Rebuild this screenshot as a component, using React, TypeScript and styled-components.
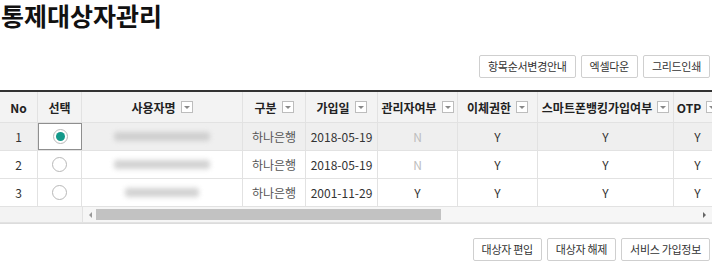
import React from "react"
import styled, { createGlobalStyle } from "styled-components"

const GlobalStyle = createGlobalStyle`
    body {
        margin : 0;
        background : #fff;
        font-family : "Noto Sans CJK KR", "Noto Sans", sans-serif;
        color : #333;
    }
`

const COLS = "38px 44px 161px 63px 72px 80px 80px 136px 48px"

const Page = styled.div`
    width : 712px;
    overflow : hidden;
`

const Title = styled.h1`
    margin : 0;
    padding-left : 1px;
    font-size : 25px;
    line-height : 30px;
    font-weight : 700;
    color : #111;
`

const Toolbar = styled.div<{ $top: number }>`
    display : flex;
    justify-content : flex-end;
    gap : 5px;
    padding-right : 2px;
    margin-top : ${p => p.$top}px;
`

const Button = styled.button`
    height : 23px;
    padding : 0 8px;
    background : #fff;
    border : 1px solid #cfcfcf;
    border-radius : 2px;
    font-family : "Noto Sans CJK KR", sans-serif;
    font-size : 11px;
    letter-spacing : -0.3px;
    color : #333;
    line-height : 21px;
`

const Grid = styled.div`
    margin-top : 12px;
    border-top : 2px solid #333;
    border-bottom : 1px solid #dcdcdc;
    width : 712px;
    overflow : hidden;
`

const Row = styled.div<{ $selected?: boolean; $head?: boolean }>`
    display : grid;
    grid-template-columns : ${COLS};
    height : ${p => (p.$head ? 31 : 28)}px;
    background : ${p => (p.$head ? "#f3f3f3" : p.$selected ? "#efefef" : "#fff")};
    border-bottom : 1px solid #e2e2e2;
    box-sizing : border-box;
    width : max-content;
`

const Cell = styled.div<{ $active?: boolean; $muted?: boolean; $head?: boolean }>`
    display : flex;
    align-items : center;
    justify-content : center;
    gap : 5px;
    border-right : 1px solid #e2e2e2;
    font-size : 12px;
    font-weight : ${p => (p.$head ? 700 : 400)};
    color : ${p => (p.$muted ? "#bdbdbd" : p.$head ? "#222" : "#333")};
    white-space : nowrap;
    box-sizing : border-box;
    ${p => p.$active && `
        background : #fff;
        border : 1.5px solid #8f8f8f;
    `}
`

const Blurred = styled.span<{ $w: number }>`
    display : inline-block;
    width : ${p => p.$w}px;
    height : 9px;
    background : #c8c8c8;
    border-radius : 3px;
    filter : blur(2.5px);
    opacity : 0.8;
`

const Bank = styled.span`
    color : #555;
`

const FilterBox = styled.span`
    display : inline-flex;
    flex : none;
    align-items : center;
    justify-content : center;
    width : 12px;
    height : 12px;
    box-sizing : border-box;
    border : 1px solid #bdbdbd;
    background : #fff;
    &::after {
        content : "";
        border-left : 3px solid transparent;
        border-right : 3px solid transparent;
        border-top : 3px solid #888;
    }
`

const Radio = styled.span<{ $on?: boolean }>`
    display : inline-flex;
    align-items : center;
    justify-content : center;
    width : 15px;
    height : 15px;
    box-sizing : border-box;
    border-radius : 50%;
    border : 1px solid #b8b8b8;
    background : #fff;
    &::after {
        content : "";
        width : 9px;
        height : 9px;
        border-radius : 50%;
        background : ${p => (p.$on ? "#14998a" : "transparent")};
    }
`

const ScrollRow = styled.div`
    display : flex;
    height : 15px;
    border-bottom : 1px solid #e2e2e2;
`

const Frozen = styled.div`
    width : 82px;
    background : #f3f3f3;
    border-right : 1px solid #e2e2e2;
`

const Track = styled.div`
    flex : 1;
    display : flex;
    align-items : center;
    background : #f6f6f6;
    padding : 0 6px;
    gap : 4px;
`

const Arrow = styled.span<{ $dir: "left" | "right" }>`
    width : 0;
    height : 0;
    border-top : 3px solid transparent;
    border-bottom : 3px solid transparent;
    ${p => (p.$dir === "left" ? "border-right : 3px solid #999;" : "border-left : 3px solid #666;")}
`

const Thumb = styled.div`
    width : 345px;
    height : 11px;
    background : #c2c2c2;
`

const Spacer = styled.div`
    flex : 1;
`

const headers = [
    { label: "No" },
    { label: "선택" },
    { label: "사용자명", filter: true },
    { label: "구분", filter: true },
    { label: "가입일", filter: true },
    { label: "관리자여부", filter: true },
    { label: "이체권한", filter: true },
    { label: "스마트폰뱅킹가입여부", filter: true },
    { label: "OTP", filter: true },
]

const rows = [
    { no: 1, name: 96, date: "2018-05-19", admin: "N", selected: true },
    { no: 2, name: 96, date: "2018-05-19", admin: "N" },
    { no: 3, name: 74, date: "2001-11-29", admin: "Y" },
]

function App() {
    return (
        <Page>
            <GlobalStyle />
            <Title>통제대상자관리</Title>
            <Toolbar $top={25}>
                <Button>항목순서변경안내</Button>
                <Button>엑셀다운</Button>
                <Button>그리드인쇄</Button>
            </Toolbar>
            <Grid>
                <Row $head>
                    {headers.map(h => (
                        <Cell $head key={h.label}>
                            {h.label}
                            {h.filter && <FilterBox />}
                        </Cell>
                    ))}
                </Row>
                {rows.map(r => (
                    <Row key={r.no} $selected={r.selected}>
                        <Cell>{r.no}</Cell>
                        <Cell $active={r.selected}>
                            <Radio $on={r.selected} />
                        </Cell>
                        <Cell>
                            <Blurred $w={r.name} />
                        </Cell>
                        <Cell>
                            <Bank>하나은행</Bank>
                        </Cell>
                        <Cell>{r.date}</Cell>
                        <Cell $muted={r.admin === "N"}>{r.admin}</Cell>
                        <Cell>Y</Cell>
                        <Cell>Y</Cell>
                        <Cell>Y</Cell>
                    </Row>
                ))}
                <ScrollRow>
                    <Frozen />
                    <Track>
                        <Arrow $dir="left" />
                        <Thumb />
                        <Spacer />
                        <Arrow $dir="right" />
                    </Track>
                </ScrollRow>
            </Grid>
            <Toolbar $top={14}>
                <Button>대상자 편입</Button>
                <Button>대상자 해제</Button>
                <Button>서비스 가입정보</Button>
            </Toolbar>
        </Page>
    )
}

export default App
